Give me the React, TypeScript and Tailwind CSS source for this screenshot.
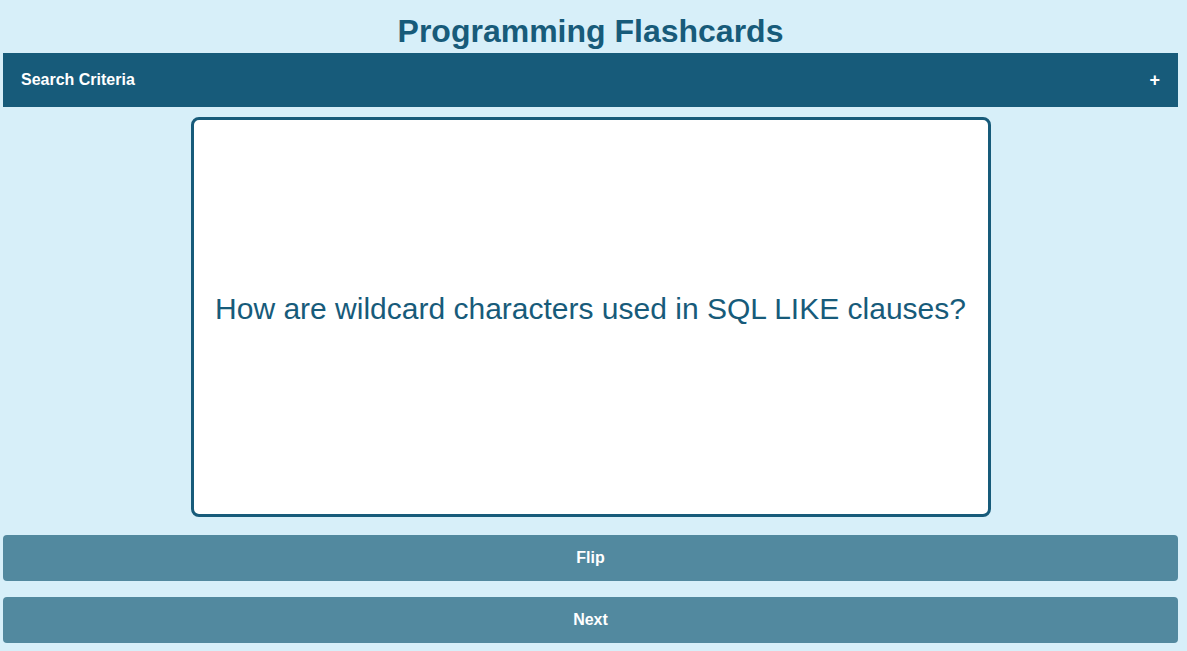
import React, { useState } from "react"

const cards = [
    { q: "How are wildcard characters used in SQL LIKE clauses?", a: "% matches any sequence of characters, _ matches a single character." },
]

const App = () => {
    const [flipped, setFlipped] = useState(false);
    const [index, setIndex] = useState(0);
    const [open, setOpen] = useState(false);

    const card = cards[index % cards.length];

    return (
        <div className="min-h-[651px] bg-[#d7eff9] pl-[3px] pr-[9px] font-['Liberation_Sans',Arial,sans-serif]">
            {/* title */}
            <h1 className="h-[53px] pt-[13px] text-center text-[32px] leading-[37px] font-bold text-[#175b7a]">
                Programming Flashcards
            </h1>

            {/* collapsible search bar */}
            <div
                onClick={() => setOpen(!open)}
                className="flex h-[54px] cursor-pointer items-center justify-between bg-[#175b7a] pl-[18px] pr-[18px] text-white"
            >
                <span className="text-base font-bold">Search Criteria</span>
                <span className="text-lg font-bold">{open ? "−" : "+"}</span>
            </div>

            {/* card */}
            <div className="flex justify-center pt-[10px]">
                <div className="flex h-[400px] w-[800px] items-center justify-center rounded-lg border-[3px] border-[#175b7a] bg-white px-4 pb-4 text-center">
                    <p className="text-[30px] leading-9 text-[#175b7a]">{flipped ? card.a : card.q}</p>
                </div>
            </div>

            {/* buttons */}
            <div className="flex flex-col gap-[16px] pt-[18px] pb-[9px]">
                <button
                    onClick={() => setFlipped(!flipped)}
                    className="h-[46px] w-full rounded bg-[#52899f] text-base font-bold text-white"
                >
                    Flip
                </button>
                <button
                    onClick={() => { setIndex(index + 1); setFlipped(false); }}
                    className="h-[46px] w-full rounded bg-[#52899f] text-base font-bold text-white"
                >
                    Next
                </button>
            </div>
        </div>
    )
}

export default App;
